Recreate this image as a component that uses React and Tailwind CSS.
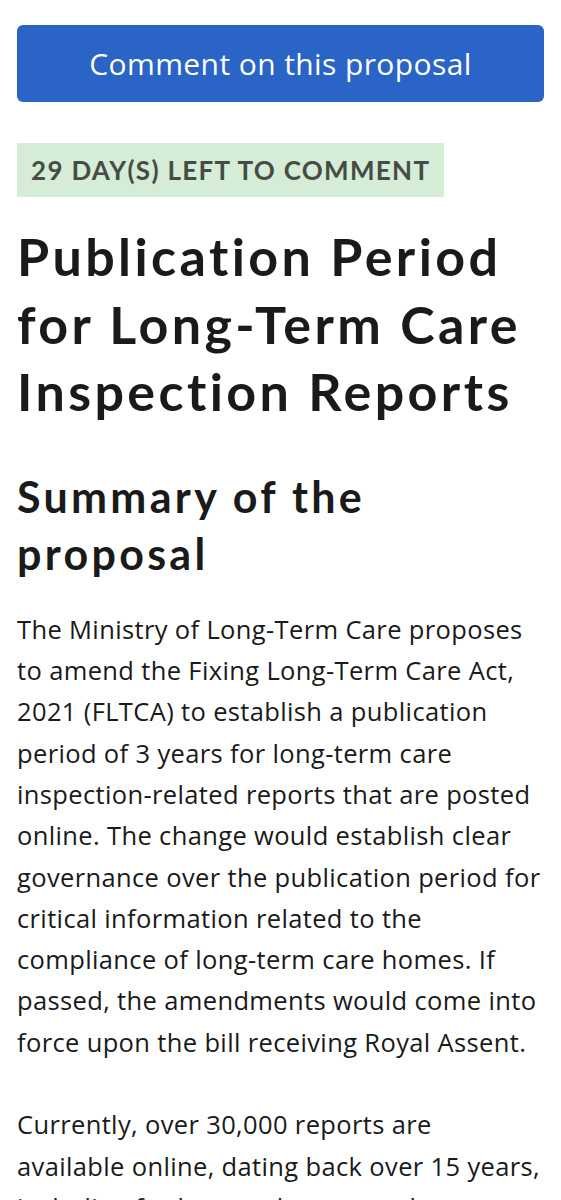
import React from "react";

const App = () => {
  return (
    <div className="bg-white min-h-[1200px] px-[17px] pt-[25px] text-[#1a1a1a]">
      {/* Call to action */}
      <button className="w-full h-[77px] rounded-[6px] bg-[#2a64c6] text-white text-[30px] tracking-[0.4px] font-['Open_Sans',sans-serif]">
        Comment on this proposal
      </button>

      {/* Countdown badge */}
      <div className="mt-[41px]">
        <span className="inline-flex items-center h-[54px] px-[14px] bg-[#d5ecd7] text-[#454c46] text-[26px] font-bold uppercase tracking-[1.3px] font-['Lato',sans-serif]">
          29 day(s) left to comment
        </span>
      </div>

      <h1 className="mt-[26px] text-[52px] leading-[67.6px] font-bold tracking-[3.4px] font-['Lato',sans-serif]">
        Publication Period for Long-Term Care Inspection Reports
      </h1>

      <h2 className="mt-[42px] text-[43px] leading-[57px] font-bold tracking-[3.3px] font-['Lato',sans-serif]">
        Summary of the proposal
      </h2>

      <div className="mt-[27px] text-[25.5px] leading-[41.3px] tracking-[0.36px] font-['Open_Sans',sans-serif]">
        <p>
          The Ministry of Long-Term Care proposes to amend the Fixing Long-Term
          Care Act, 2021 (FLTCA) to establish a publication period of 3 years
          for long-term care inspection-related reports that are posted online.
          The change would establish clear governance over the publication
          period for critical information related to the compliance of
          long-term care homes. If passed, the amendments would come into force
          upon the bill receiving Royal Assent.
        </p>
        <p className="mt-[41.3px]">
          Currently, over 30,000 reports are available online, dating back over
          15 years, including for homes that are no longer operating.
        </p>
      </div>
    </div>
  );
};

export default App;
